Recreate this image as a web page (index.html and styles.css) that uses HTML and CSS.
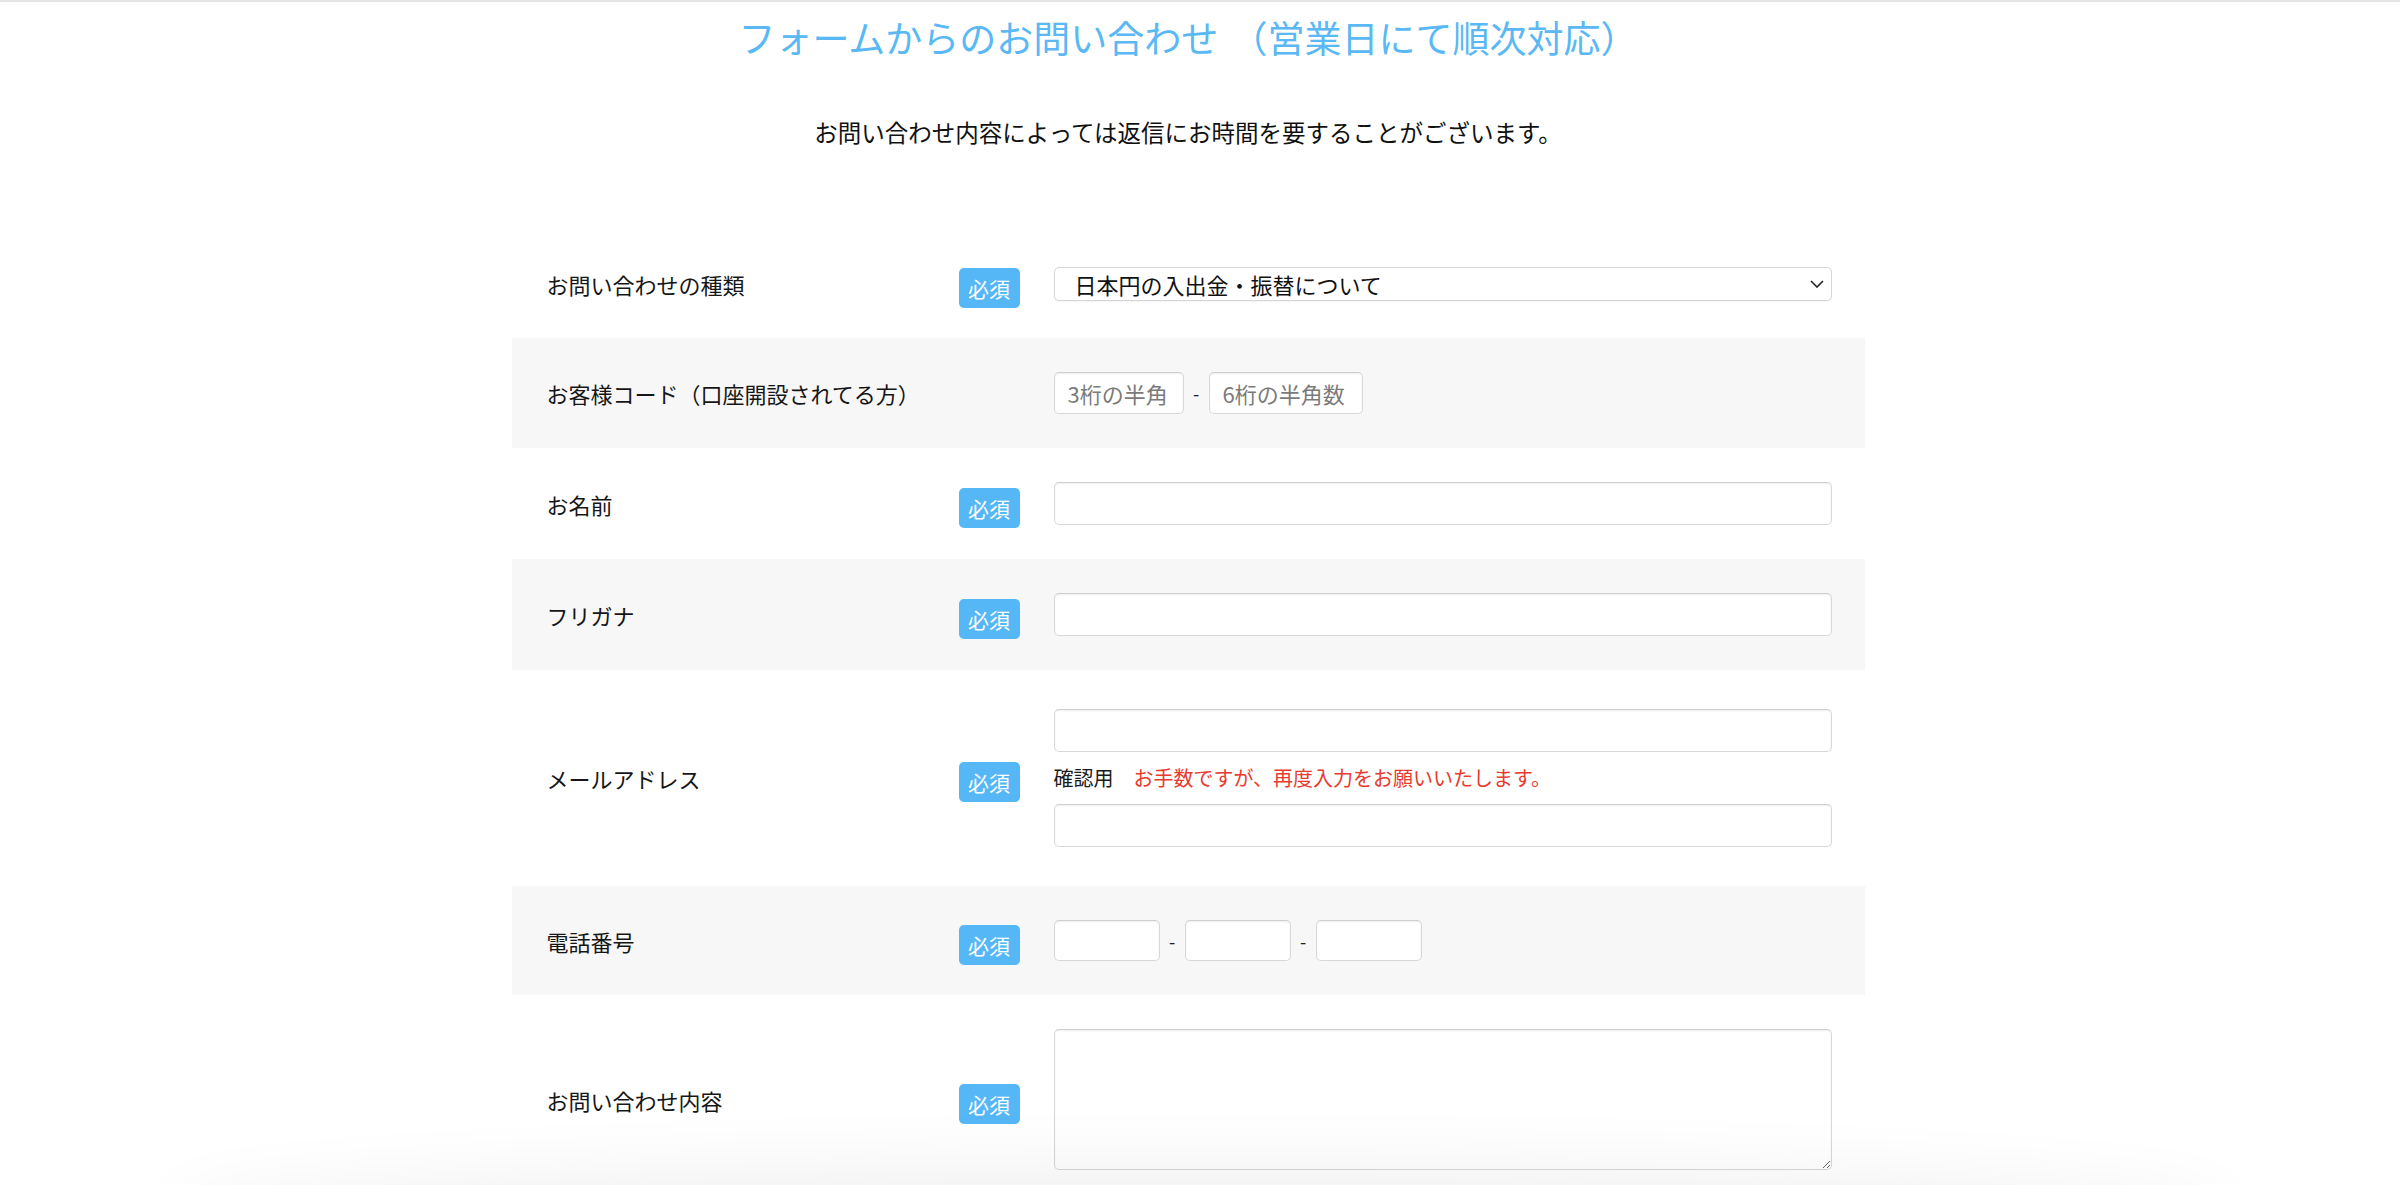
FILE: index.html
```html
<!DOCTYPE html>
<html lang="ja">
<head>
<meta charset="utf-8">
<title>お問い合わせ</title>
<link rel="stylesheet" href="styles.css">
</head>
<body>
<div class="topline"></div>
<main class="page">
  <h1 class="title">フォームからのお問い合わせ （営業日にて順次対応）</h1>
  <p class="lead">お問い合わせ内容によっては返信にお時間を要することがございます。</p>

  <form class="form">
    <div class="row row-select">
      <div class="label">お問い合わせの種類</div>
      <div class="req"><span class="badge">必須</span></div>
      <div class="field">
        <div class="select-wrap">
          <select class="select">
            <option>日本円の入出金・振替について</option>
          </select>
          <svg class="chev" width="14" height="8" viewBox="0 0 14 8"><path d="M1 1 L7 7 L13 1" fill="none" stroke="#222" stroke-width="1.6"/></svg>
        </div>
      </div>
    </div>

    <div class="row alt">
      <div class="label">お客様コード（口座開設されてる方）</div>
      <div class="req"></div>
      <div class="field inline">
        <input class="input code3" type="text" placeholder="3桁の半角">
        <span class="dash">-</span>
        <input class="input code6" type="text" placeholder="6桁の半角数">
      </div>
    </div>

    <div class="row">
      <div class="label">お名前</div>
      <div class="req"><span class="badge">必須</span></div>
      <div class="field"><input class="input full" type="text"></div>
    </div>

    <div class="row alt">
      <div class="label">フリガナ</div>
      <div class="req"><span class="badge">必須</span></div>
      <div class="field"><input class="input full" type="text"></div>
    </div>

    <div class="row">
      <div class="label">メールアドレス</div>
      <div class="req"><span class="badge">必須</span></div>
      <div class="field email">
        <input class="input full" type="text">
        <p class="note"><span class="confirm">確認用</span><span class="warn">お手数ですが、再度入力をお願いいたします。</span></p>
        <input class="input full" type="text">
      </div>
    </div>

    <div class="row alt">
      <div class="label">電話番号</div>
      <div class="req"><span class="badge">必須</span></div>
      <div class="field inline tel">
        <input class="input phone" type="text">
        <span class="dash">-</span>
        <input class="input phone" type="text">
        <span class="dash">-</span>
        <input class="input phone" type="text">
      </div>
    </div>

    <div class="row">
      <div class="label">お問い合わせ内容</div>
      <div class="req"><span class="badge">必須</span></div>
      <div class="field"><textarea class="textarea"></textarea></div>
    </div>
  </form>
</main>
<div class="bottom-shade"></div>
</body>
</html>
```

FILE: styles.css
```css
* { box-sizing: border-box; }

html, body {
  margin: 0;
  background: #ffffff;
}

body {
  font-family: "Noto Sans CJK JP", "Noto Sans", "Liberation Sans", sans-serif;
  color: #1a1a1a;
  padding-right: 24px;
  overflow: hidden;
}

.topline {
  height: 2px;
  background: #e4e4e4;
  margin-right: -24px;
}

.page {
  width: 1353px;
  margin: 0 auto;
}

.title {
  margin: 8px 0 0;
  font-size: 37px;
  line-height: 54px;
  font-weight: 400;
  word-spacing: 4px;
  color: #5ab8f5;
  text-align: center;
}

.lead {
  margin: 51px 0 0;
  font-size: 23.5px;
  line-height: 35px;
  text-align: center;
  color: #111;
}

.form {
  margin-top: 80px;
}

.row {
  display: grid;
  grid-template-columns: 412px 95px 1fr;
  align-items: center;
  padding: 34px 33px 34px 35px;
  background: #ffffff;
}

.row.alt {
  background: #f7f7f7;
}

.label {
  font-size: 22px;
  line-height: 30px;
  color: #161616;
}

.req {
  display: flex;
  align-items: center;
}

.badge {
  display: inline-block;
  width: 61px;
  height: 40px;
  margin: 4px 0 -4px;
  border-radius: 5px;
  background: #56b7f7;
  color: #ffffff;
  font-size: 21px;
  line-height: 40px;
  text-align: center;
}

.field {
  min-width: 0;
}

.field.inline {
  display: flex;
  align-items: center;
}

.dash {
  font-size: 18px;
  line-height: 20px;
  width: 25px;
  text-align: center;
  color: #222;
}

.input {
  display: block;
  height: 43px;
  border: 1px solid #d8d8d8;
  border-top-color: #cfcfcf;
  border-radius: 5px;
  background: #ffffff;
  box-shadow: inset 0 1px 2px rgba(0, 0, 0, 0.07);
  font-family: inherit;
  font-size: 22px;
  color: #222;
  padding: 0 13px;
  outline: none;
}

.input::placeholder {
  color: #7a7a7a;
}

.input.full {
  width: 100%;
}

.input.code3 {
  width: 130px;
  height: 42px;
}

.input.code6 {
  width: 154px;
  height: 42px;
}

.input.phone {
  width: 106px;
  height: 41px;
}

.select-wrap {
  position: relative;
}

.select {
  display: block;
  width: 100%;
  height: 34px;
  appearance: none;
  -webkit-appearance: none;
  border: 1px solid #d6d6d6;
  border-radius: 5px;
  background: #ffffff;
  box-shadow: 0 1px 1px rgba(0, 0, 0, 0.04);
  font-family: inherit;
  font-size: 22px;
  line-height: 32px;
  color: #111;
  padding: 0 40px 0 20px;
  outline: none;
}

.chev {
  position: absolute;
  right: 8px;
  top: 13px;
  pointer-events: none;
}

.email {
  padding: 5px 0;
}

.note {
  margin: 11px 0;
  display: flex;
  align-items: center;
  gap: 20px;
  font-size: 20px;
  line-height: 30px;
}

.confirm {
  color: #1a1a1a;
}

.warn {
  color: #e63b2e;
}

.textarea {
  display: block;
  width: 100%;
  height: 141px;
  border: 1px solid #d8d8d8;
  border-top-color: #cfcfcf;
  border-radius: 5px;
  background: #ffffff;
  box-shadow: inset 0 1px 2px rgba(0, 0, 0, 0.07);
  font-family: inherit;
  font-size: 22px;
  padding: 10px 13px;
  outline: none;
}

.bottom-shade {
  position: fixed;
  left: 180px;
  right: 180px;
  bottom: -70px;
  height: 70px;
  border-radius: 50%;
  background: #eeeeee;
  box-shadow: 0 0 70px 20px rgba(0, 0, 0, 0.06);
}
```
